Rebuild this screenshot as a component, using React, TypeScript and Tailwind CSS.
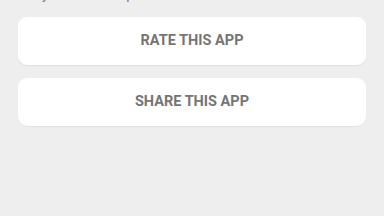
export default function App() {
  const actions = ['RATE THIS APP', 'SHARE THIS APP'];

  return (
    <div
      className="h-[216px] w-[384px] overflow-hidden bg-[#eeeeee]"
      style={{ fontFamily: 'Roboto, "Noto Sans", sans-serif' }}
    >
      {/* Intro text, scrolled mostly out of view */}
      <p className="-mt-[14px] px-[18px] text-[14px] leading-[16px] text-[#7a7a7a]">
        Did you like this ap
      </p>

      <div className="mt-[15px] flex flex-col gap-[13px] px-[18px]">
        {actions.map((label) => (
          <button
            key={label}
            className="flex h-[48px] w-[348px] items-center justify-center rounded-[9px] bg-white text-[14.5px] font-bold text-[#757575] shadow-[0_1px_1px_rgba(0,0,0,0.06)]"
          >
            {label}
          </button>
        ))}
      </div>
    </div>
  );
}
